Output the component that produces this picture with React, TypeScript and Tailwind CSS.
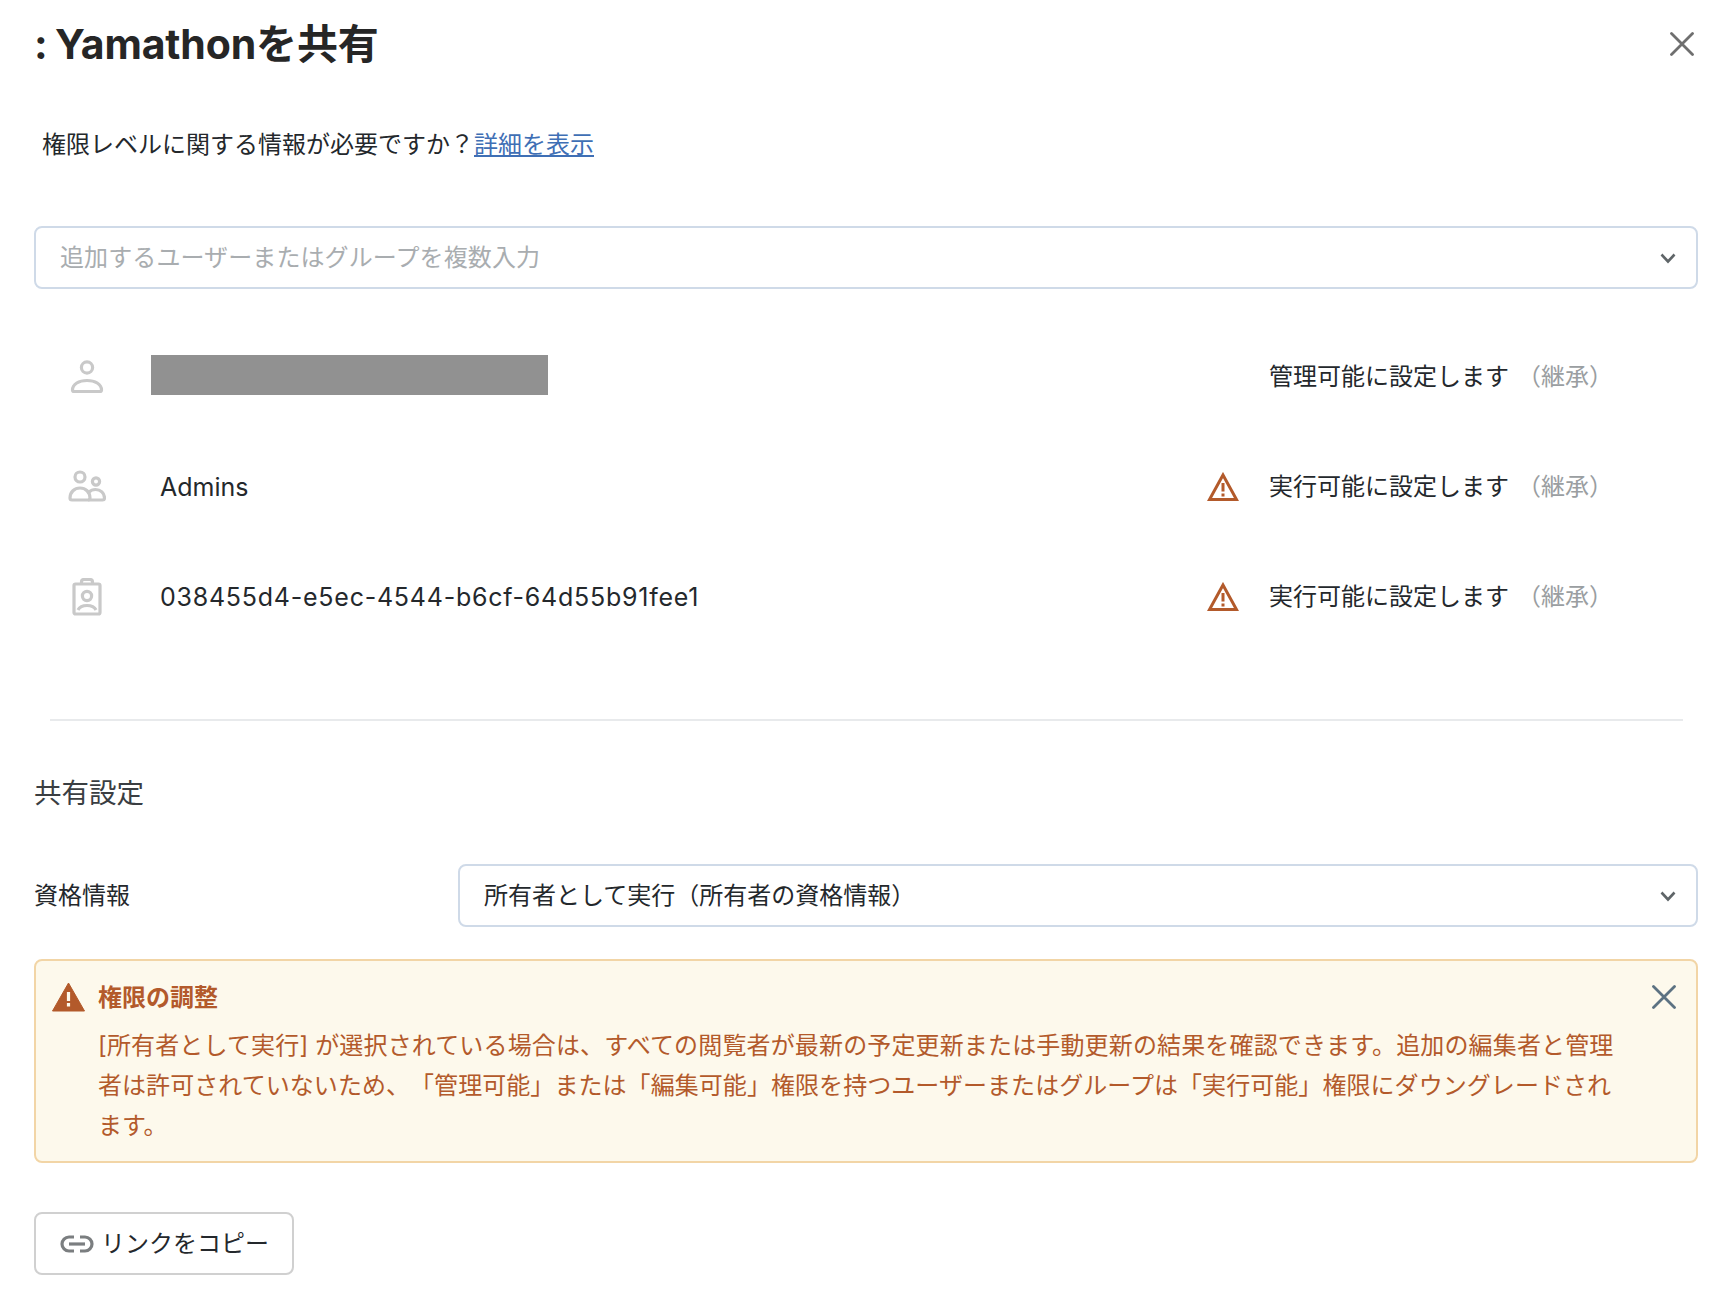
const font = "font-['Inter','Noto_Sans_CJK_JP',sans-serif]";

const Chevron = () => (
  <svg width="16" height="12" viewBox="0 0 16 12" fill="none" stroke="#5f6568" strokeWidth="2.6">
    <path d="M1.5 2.5 8 9.5l6.5-7" />
  </svg>
);

const CloseIcon = ({ size, color, width }: { size: number; color: string; width: number }) => (
  <svg width={size} height={size} viewBox="0 0 24 24" fill="none" stroke={color} strokeWidth={width} strokeLinecap="round">
    <path d="M1.5 1.5 22.5 22.5M22.5 1.5 1.5 22.5" />
  </svg>
);

const UserIcon = () => (
  <svg width="34" height="34" viewBox="0 0 34 34" fill="none" stroke="#c9c9c9" strokeWidth="3.2">
    <circle cx="17" cy="7.5" r="5.6" />
    <path d="M2.5 30c0-6 6.500-9.500 14.500-9.500S31.500 24 31.500 30c0 1-.5 1.500-1.500 1.500H4c-1 0-1.500-.5-1.500-1.500Z" />
  </svg>
);

const GroupIcon = () => (
  <svg width="38" height="34" viewBox="0 0 38 34" fill="none" stroke="#c9c9c9" strokeWidth="3.2">
    <circle cx="12" cy="7" r="5" />
    <circle cx="28" cy="11.500" r="3.600" />
    <path d="M2 28c0-6 4.500-10 10-10s10 4 10 10c0 1-.5 2-2 2H4c-1.500 0-2-1-2-2Z" />
    <path d="M21 22c1.500-1.500 4-2.500 6.500-2.500 5 0 9 3.500 9 8.500 0 1.500-.5 2-2 2H20" />
  </svg>
);

const BadgeIcon = () => (
  <svg width="30" height="38" viewBox="0 0 30 38" fill="none" stroke="#c9c9c9" strokeWidth="3.2">
    <path d="M9.500 6.500V4c0-1.500 1-2.500 2.500-2.500h6c1.500 0 2.500 1 2.500 2.500v2.500" />
    <rect x="2" y="6" width="26" height="30" rx="1.500" />
    <circle cx="15" cy="18" r="4.600" />
    <path d="M6 32c1.500-3 5-4.500 9-4.500s7.500 1.500 9 4.500" />
  </svg>
);

const WarnOutline = () => (
  <svg width="32" height="30" viewBox="0 0 32 30" fill="none">
    <path d="M16 3 2.500 27.500h27Z" stroke="#b35a2b" strokeWidth="3" strokeLinejoin="miter" />
    <path d="M16 11v8.500M16 21.500v3" stroke="#b35a2b" strokeWidth="3" />
  </svg>
);

const WarnSolid = () => (
  <svg width="33" height="30" viewBox="0 0 33 30">
    <path d="M16.500 1 .5 29h32Z" fill="#b35a2b" stroke="#b35a2b" strokeLinejoin="round" />
    <path d="M16.500 10v9M16.500 21v3.500" stroke="#fdf9ec" strokeWidth="3.200" />
  </svg>
);

const LinkIcon = () => (
  <svg width="34" height="20" viewBox="0 0 34 20" fill="none" stroke="#7b7e80" strokeWidth="3.200">
    <path d="M14 3H9a7 7 0 0 0 0 14h5" />
    <path d="M20 3h5a7 7 0 0 1 0 14h-5" />
    <path d="M9 10h16" />
  </svg>
);

const rows = [
  { icon: <UserIcon />, level: "管理可能に設定します", warn: false },
  { icon: <GroupIcon />, name: "Admins", level: "実行可能に設定します", warn: true },
  { icon: <BadgeIcon />, name: "038455d4-e5ec-4544-b6cf-64d55b91fee1", mono: true, level: "実行可能に設定します", warn: true },
];

export default function App() {
  return (
    <div className={`${font} flex h-[1300px] w-[1728px] flex-col bg-white pl-[34px] pr-[30px] text-[24px] text-[#24282c]`}>
      <div className="flex h-[90px] items-center justify-between">
        <h1 className="text-[41px] font-bold tracking-[-0.15px] [word-spacing:-2px] text-[#262626]">: Yamathonを共有</h1>
        <button className="mb-[2px] mr-[4px]">
          <CloseIcon size={24} color="#6f6f6f" width={2.8} />
        </button>
      </div>

      <p className="ml-[8px] mt-[39px] leading-[32px]">
        権限レベルに関する情報が必要ですか？
        <a className="text-[#3f6fb5] underline">詳細を表示</a>
      </p>

      <div className="mt-[65px] flex h-[63px] items-center justify-between rounded-[8px] border-2 border-[#cfdae8] pl-[24px] pr-[20px] text-[#a9adb0]">
        <span className="tracking-[0.1px]">追加するユーザーまたはグループを複数入力</span>
        <Chevron />
      </div>

      <div className="mt-[33px] flex flex-col">
        {rows.map((row, i) => (
          <div key={i} className="flex h-[110px] items-center">
            <div className="flex w-[117px] justify-center pr-[11px]">{row.icon}</div>
            {row.name ? (
              <span className={row.mono ? "ml-[9px] pt-[2px] text-[25px] tracking-[0.76px]" : "ml-[9px] pt-[2px] text-[25px]"}>{row.name}</span>
            ) : (
              <div className="mb-[4px] h-[40px] w-[397px] bg-[#919191]" />
            )}
            <div className="ml-auto flex items-center pr-[85px]">
              {row.warn && (
                <span className="mr-[30px]">
                  <WarnOutline />
                </span>
              )}
              <span>{row.level}</span>
              <span className="ml-[8px] text-[#9a9ea1]">（継承）</span>
            </div>
          </div>
        ))}
      </div>

      <div className="ml-[16px] mr-[15px] mt-[67px] h-[2px] bg-[#e8eaec]" />

      <h2 className="mt-[54px] text-[27.5px] leading-[36px] text-[#3a3e42]">共有設定</h2>

      <div className="mt-[53px] flex items-center">
        <span className="w-[424px]">資格情報</span>
        <div className="flex h-[63px] flex-1 items-center justify-between rounded-[8px] border-2 border-[#cfdae8] pl-[24px] pr-[20px]">
          <span>所有者として実行（所有者の資格情報）</span>
          <Chevron />
        </div>
      </div>

      <div className="relative mt-[32px] h-[204px] rounded-[8px] border-2 border-[#f2d5a6] bg-[#fdf9ec] pl-[62px] text-[#b35a2b]">
        <div className="absolute left-[16px] top-[21px]">
          <WarnSolid />
        </div>
        <button className="absolute right-[20px] top-[24px]">
          <CloseIcon size={24} color="#5c7282" width={2.8} />
        </button>
        <p className="mt-[19px] font-semibold leading-[36px]">権限の調整</p>
        <p className="mt-[10px] whitespace-nowrap leading-[40px] [text-spacing-trim:space-all]">
          <span className="tracking-[0.15px]">[所有者として実行] が選択されている場合は、すべての閲覧者が最新の予定更新または手動更新の結果を確認できます。追加の編集者と管理</span>
          <br />
          <span className="tracking-[0.06px]">者は許可されていないため、「管理可能」または「編集可能」権限を持つユーザーまたはグループは「実行可能」権限にダウングレードされ</span>
          <br />
          ます。
        </p>
      </div>

      <button className="mt-[49px] flex h-[63px] w-[260px] items-center gap-[7px] rounded-[8px] border-2 border-[#d0d0d0] pl-[24px] text-[#24282c]">
        <LinkIcon />
        <span>リンクをコピー</span>
      </button>
    </div>
  );
}
